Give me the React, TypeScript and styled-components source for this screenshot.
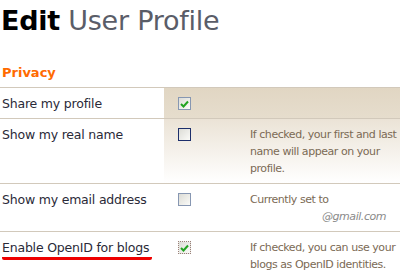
import React from 'react';
import styled, { createGlobalStyle } from 'styled-components';

const GlobalStyle = createGlobalStyle`
  body {
    margin: 0;
    background: #ffffff;
    font-family: 'DejaVu Sans', Verdana, sans-serif;
  }
`;

type RowInfo = {
  label: string;
  checked: boolean;
  tone: 'solid' | 'fade' | 'plain';
  box: 'soft' | 'dark' | 'focus';
  marked?: boolean;
  note?: React.ReactNode;
};

const Check = () => (
  <svg width="9" height="8" viewBox="0 0 9 8">
    <path d="M1 4 L3.5 6.5 L8 1.5" fill="none" stroke="#21a321" strokeWidth="2" />
  </svg>
);

const App = () => {
  const rows: RowInfo[] = [
    { label: 'Share my profile', checked: true, tone: 'solid', box: 'soft' },
    {
      label: 'Show my real name',
      checked: false,
      tone: 'fade',
      box: 'dark',
      note: 'If checked, your first and last name will appear on your profile.',
    },
    {
      label: 'Show my email address',
      checked: false,
      tone: 'plain',
      box: 'soft',
      note: (
        <>
          Currently set to
          <Email>@gmail.com</Email>
        </>
      ),
    },
    {
      label: 'Enable OpenID for blogs',
      checked: true,
      tone: 'plain',
      box: 'focus',
      marked: true,
      note: 'If checked, you can use your blogs as OpenID identities.',
    },
  ];

  return (
    <Page>
      <GlobalStyle />
      <Title>
        <strong>Edit</strong> User Profile
      </Title>
      <Section>Privacy</Section>
      <Table>
        {rows.map((r) => (
          <Row key={r.label}>
            <Label>
              {r.marked ? <Marked>{r.label}</Marked> : r.label}
            </Label>
            <Shade $tone={r.tone}>
              <BoxCell>
                <Box $kind={r.box}>{r.checked && <Check />}</Box>
              </BoxCell>
              <Note>{r.note}</Note>
            </Shade>
          </Row>
        ))}
      </Table>
    </Page>
  );
};

export default App;

const Page = styled.div`
  width: 400px;
  height: 273px;
  overflow: hidden;
`;

const Title = styled.h1`
  margin: 0;
  padding: 5px 0 0 1px;
  font-size: 27px;
  line-height: 32px;
  font-weight: normal;
  color: #5a5d68;
  letter-spacing: -0.25px;
  strong {
    color: #000;
    font-weight: bold;
  }
`;

const Section = styled.h2`
  margin: 27px 0 0 2px;
  font-size: 13px;
  line-height: 18px;
  font-weight: bold;
  color: #ff6a00;
`;

const Table = styled.div`
  margin-top: 5px;
  display: flex;
  flex-direction: column;
`;

const Row = styled.div`
  display: grid;
  grid-template-columns: 164px 1fr;
  border-top: 1px solid #d2c9bb;
`;

const Label = styled.div`
  padding: 7px 0 6px 2px;
  font-size: 12.5px;
  line-height: 17px;
  letter-spacing: -0.2px;
  color: #2a2a38;
`;

const Marked = styled.span`
  display: inline-block;
  width: 150px;
  padding-bottom: 1px;
  border-bottom: 3px solid #ee0000;
  border-radius: 2px;
`;

const toneBg = {
  solid: 'linear-gradient(#e1d6c3, #e6ddcd)',
  fade: 'linear-gradient(#ebe3d6, #ffffff)',
  plain: '#ffffff',
};

const Shade = styled.div<{ $tone: RowInfo['tone'] }>`
  display: grid;
  grid-template-columns: 86px 1fr;
  background: ${(p) => toneBg[p.$tone]};
`;

const BoxCell = styled.div`
  padding: 9px 0 0 14px;
`;

const boxBorder = {
  soft: '1px solid #8797b2',
  dark: '1px solid #1d2f6b',
  focus: '1px dotted #9a7f78',
};

const Box = styled.div<{ $kind: RowInfo['box'] }>`
  width: 11px;
  height: 11px;
  border: ${(p) => boxBorder[p.$kind]};
  background: linear-gradient(135deg, #dcdcd6, #fbfbf8);
  display: flex;
  align-items: center;
  justify-content: center;
`;

const Note = styled.div`
  padding: 7px 0 6px 0;
  font-size: 11px;
  line-height: 17px;
  letter-spacing: -0.45px;
  color: #7b6a55;
  min-height: 17px;
`;

const Email = styled.span`
  display: block;
  padding-left: 72px;
  font-style: italic;
  color: #8a8a8a;
`;
